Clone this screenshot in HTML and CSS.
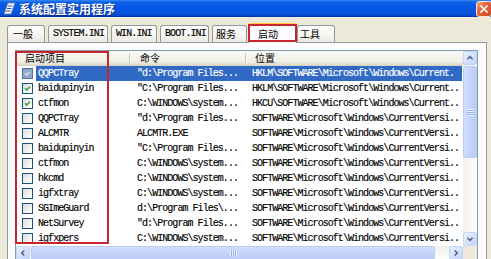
FILE: index.html
```html
<!DOCTYPE html>
<html lang="zh-CN">
<head>
<meta charset="utf-8">
<title>系统配置实用程序</title>
<link rel="stylesheet" href="styles.css">
</head>
<body>
<div class="window">
  <div class="titlebar">
    <svg class="app-icon" viewBox="0 0 13 13" width="13" height="13">
      <path d="M5 1 L12 1 L8 12 L1 12 Z" fill="#F4F6FA" stroke="#6A7FA8" stroke-width="0.8"/>
      <path d="M5 4 L9.5 4 M4 6.5 L8.5 6.5 M3 9 L7.5 9" stroke="#2D56B8" stroke-width="1"/>
    </svg>
    <span class="title">系统配置实用程序</span>
    <div class="close">
      <svg viewBox="0 0 16 16" width="16" height="16">
        <path d="M4.5 4.5 L11.5 11.5 M11.5 4.5 L4.5 11.5" stroke="#fff" stroke-width="1.8" stroke-linecap="square"/>
      </svg>
    </div>
  </div>

  <div class="tabs">
    <div class="tab w-general">一般</div>
    <div class="tab w-system mono">SYSTEM.INI</div>
    <div class="tab w-win mono">WIN.INI</div>
    <div class="tab w-boot mono">BOOT.INI</div>
    <div class="tab w-service">服务</div>
    <div class="tab tab-active w-startup">启动</div>
    <div class="tab w-tools">工具</div>
  </div>

  <div class="panel">
    <div class="listview">
      <div class="lv-main">
        <div class="lv-header">
          <div class="hcell h1">启动项目</div>
          <div class="hcell h2">命令</div>
          <div class="hcell h3">位置</div>
        </div>

        <div class="row selected">
          <div class="cb-cell"><span class="cb cb-sel"><svg viewBox="0 0 11 11"><path d="M2.5 5.3 L4.5 7.4 L8.5 3.2" class="chk-sel"/></svg></span></div>
          <div class="cell name">QQPCTray</div>
          <div class="cell cmd">"d:\Program Files...</div>
          <div class="cell loc">HKLM\SOFTWARE\Microsoft\Windows\Current.</div>
        </div>
        <div class="row">
          <div class="cb-cell"><span class="cb"><svg viewBox="0 0 11 11"><path d="M2.5 5.3 L4.5 7.4 L8.5 3.2" class="chk"/></svg></span></div>
          <div class="cell name">baidupinyin</div>
          <div class="cell cmd">"C:\Program Files...</div>
          <div class="cell loc">HKLM\SOFTWARE\Microsoft\Windows\Current..</div>
        </div>
        <div class="row">
          <div class="cb-cell"><span class="cb"><svg viewBox="0 0 11 11"><path d="M2.5 5.3 L4.5 7.4 L8.5 3.2" class="chk"/></svg></span></div>
          <div class="cell name">ctfmon</div>
          <div class="cell cmd">C:\WINDOWS\system...</div>
          <div class="cell loc">HKCU\SOFTWARE\Microsoft\Windows\Current..</div>
        </div>
        <div class="row">
          <div class="cb-cell"><span class="cb"></span></div>
          <div class="cell name">QQPCTray</div>
          <div class="cell cmd">"d:\Program Files...</div>
          <div class="cell loc">SOFTWARE\Microsoft\Windows\CurrentVersi..</div>
        </div>
        <div class="row">
          <div class="cb-cell"><span class="cb"></span></div>
          <div class="cell name">ALCMTR</div>
          <div class="cell cmd">ALCMTR.EXE</div>
          <div class="cell loc">SOFTWARE\Microsoft\Windows\CurrentVersi..</div>
        </div>
        <div class="row">
          <div class="cb-cell"><span class="cb"></span></div>
          <div class="cell name">baidupinyin</div>
          <div class="cell cmd">"C:\Program Files...</div>
          <div class="cell loc">SOFTWARE\Microsoft\Windows\CurrentVersi..</div>
        </div>
        <div class="row">
          <div class="cb-cell"><span class="cb"></span></div>
          <div class="cell name">ctfmon</div>
          <div class="cell cmd">C:\WINDOWS\system...</div>
          <div class="cell loc">SOFTWARE\Microsoft\Windows\CurrentVersi..</div>
        </div>
        <div class="row">
          <div class="cb-cell"><span class="cb"></span></div>
          <div class="cell name">hkcmd</div>
          <div class="cell cmd">C:\WINDOWS\system...</div>
          <div class="cell loc">SOFTWARE\Microsoft\Windows\CurrentVersi..</div>
        </div>
        <div class="row">
          <div class="cb-cell"><span class="cb"></span></div>
          <div class="cell name">igfxtray</div>
          <div class="cell cmd">C:\WINDOWS\system...</div>
          <div class="cell loc">SOFTWARE\Microsoft\Windows\CurrentVersi..</div>
        </div>
        <div class="row">
          <div class="cb-cell"><span class="cb"></span></div>
          <div class="cell name">SGImeGuard</div>
          <div class="cell cmd">d:\Program Files\...</div>
          <div class="cell loc">SOFTWARE\Microsoft\Windows\CurrentVersi..</div>
        </div>
        <div class="row">
          <div class="cb-cell"><span class="cb"></span></div>
          <div class="cell name">NetSurvey</div>
          <div class="cell cmd">"d:\Program Files...</div>
          <div class="cell loc">SOFTWARE\Microsoft\Windows\CurrentVersi..</div>
        </div>
        <div class="row">
          <div class="cb-cell"><span class="cb"></span></div>
          <div class="cell name">igfxpers</div>
          <div class="cell cmd">C:\WINDOWS\system...</div>
          <div class="cell loc">SOFTWARE\Microsoft\Windows\CurrentVersi..</div>
        </div>
      </div>

      <div class="vscroll">
        <div class="sbtn"><svg viewBox="0 0 14 14"><path d="M4 8.5 L7 5.5 L10 8.5" class="arrow"/></svg></div>
        <div class="vthumb"><span class="grip-v"></span></div>
        <div class="vtrack"></div>
        <div class="sbtn"><svg viewBox="0 0 14 14"><path d="M4 5.5 L7 8.5 L10 5.5" class="arrow"/></svg></div>
      </div>

      <div class="hscroll">
        <div class="sbtn"><svg viewBox="0 0 14 14"><path d="M8.5 4 L5.5 7 L8.5 10" class="arrow"/></svg></div>
        <div class="hthumb"><span class="grip-h"></span></div>
        <div class="htrack"></div>
        <div class="sbtn"><svg viewBox="0 0 14 14"><path d="M5.5 4 L8.5 7 L5.5 10" class="arrow"/></svg></div>
      </div>
      <div class="corner"></div>
    </div>
  </div>

  <div class="mark mark-tab"></div>
  <div class="mark mark-col"></div>
</div>
</body>
</html>
```

FILE: styles.css
```css
* { box-sizing: border-box; margin: 0; padding: 0; }

html, body {
  width: 491px;
  height: 259px;
  overflow: hidden;
}

body {
  background: #ECE9D8;
  font-family: "Noto Sans CJK SC", "Noto Sans", sans-serif;
  font-size: 10px;
  color: #000;
}

.window {
  position: relative;
  width: 491px;
  height: 259px;
  overflow: hidden;
}

/* ---------- title bar ---------- */
.titlebar {
  height: 17px;
  display: flex;
  align-items: center;
  padding-left: 3px;
  background: linear-gradient(#3A8CF6 0, #0D62E6 2px, #0558E4 40%, #0753DB 80%, #0645C4 94%, #00339E 100%);
}

.app-icon { flex: none; width: 13px; height: 13px; }

.title {
  margin-left: 3px;
  color: #fff;
  font-size: 12px;
  font-weight: bold;
  line-height: 17px;
  text-shadow: 1px 1px 0 #0B2A8E;
}

.close {
  margin-left: auto;
  margin-right: -1px;
  width: 16px;
  height: 16px;
  border: 1px solid #F6E0D8;
  border-radius: 3px;
  background: linear-gradient(135deg, #F3A68A 0, #E2643D 40%, #D2451F 100%);
  display: flex;
  align-items: center;
  justify-content: center;
}
.close svg { width: 14px; height: 14px; }

/* ---------- tabs ---------- */
.mono {
  font-family: "Liberation Mono", monospace;
  font-size: 10px;
  letter-spacing: -0.9px;
  -webkit-text-stroke: 0.15px #000;
}

.tabs {
  position: relative;
  z-index: 2;
  display: flex;
  align-items: flex-end;
  gap: 3px;
  height: 19px;
  margin-top: 6px;
  padding-left: 7px;
}

.tab {
  height: 17px;
  padding-left: 5px;
  border: 1px solid #919B9C;
  border-bottom: none;
  border-radius: 3px 3px 0 0;
  background: linear-gradient(#FEFEFE, #F4F3EE 60%, #E9E8E1);
  line-height: 16px;
  white-space: nowrap;
}
.tab.mono { padding-left: 4px; }

.w-general { width: 38px; }
.w-system  { width: 60px; }
.w-win     { width: 46px; }
.w-boot    { width: 49px; }
.w-service { width: 35px; padding-left: 3px; }
.w-startup { width: 49px; }
.w-tools   { width: 38px; padding-left: 2px; }

.tab-active {
  height: 20px;
  margin: 0 -3px -1px -2px;
  padding-left: 9px;
  background: #FCFCFE;
  border-top: 2px solid #FFC83C;
  line-height: 18px;
}

/* ---------- panel ---------- */
.panel {
  position: relative;
  z-index: 1;
  height: 260px;
  margin: 0 4px 0 7px;
  padding: 7px 0 0 7px;
  border: 1px solid #919B9C;
  background: #FCFCFE;
}

.listview {
  width: 463px;
  border: 1px solid #7F9DB9;
  background: #fff;
  display: grid;
  grid-template-columns: 447px 14px;
  grid-template-rows: 195px 14px;
}

.lv-main { overflow: hidden; }

.lv-header {
  height: 15px;
  display: grid;
  grid-template-columns: 114px 116px 1fr;
  background: linear-gradient(#FAFAF6, #F0EFE6 70%, #E3E0D0 88%, #D5D1C0 100%);
  line-height: 14px;
}

.hcell {
  white-space: nowrap;
  position: relative;
}
.h1 { padding-left: 9px; }
.h2 { padding-left: 10px; }
.h3 { padding-left: 9px; }
.h1::after, .h2::after {
  content: "";
  position: absolute;
  right: 0;
  top: 2px;
  bottom: 3px;
  width: 1px;
  background: #C7C5B2;
  box-shadow: 1px 0 0 #fff;
}

.row {
  height: 15px;
  display: grid;
  grid-template-columns: 20px 94px 116px 1fr;
  align-items: center;
  font-family: "Liberation Mono", monospace;
  font-size: 10px;
  letter-spacing: -0.95px;
  line-height: 15px;
  -webkit-text-stroke: 0.15px currentColor;
}

.cell {
  height: 15px;
  white-space: nowrap;
  overflow: hidden;
}
.name { padding-left: 2px; }
.cmd  { padding-left: 7px; }
.loc  { padding-left: 6px; margin-right: 1px; }

.selected .cell {
  background: #316AC5;
  color: #fff;
}

.cb-cell {
  height: 15px;
  display: flex;
  align-items: center;
  padding-left: 6px;
}

.cb {
  display: block;
  width: 11px;
  height: 11px;
  border: 1px solid #1C5180;
  background: linear-gradient(135deg, #DCDCD7, #FFFFFF);
}
.cb svg { display: block; width: 9px; height: 9px; margin: 0; overflow: visible; }
.chk { fill: none; stroke: #21A121; stroke-width: 1.7; }

.cb-sel {
  border-color: #4F6F9E;
  background: #8FA7CB;
}
.chk-sel { fill: none; stroke: #DCE6F6; stroke-width: 1.7; }

/* ---------- scrollbars ---------- */
.vscroll {
  display: flex;
  flex-direction: column;
  background: linear-gradient(90deg, #F3F1EC, #FEFEFB);
}

.hscroll {
  display: flex;
  background: linear-gradient(#F3F1EC, #FEFEFB);
}

.sbtn {
  flex: none;
  width: 14px;
  height: 14px;
  border: 1px solid #C5D5F6;
  border-radius: 2px;
  background: linear-gradient(135deg, #E8F0FE, #C3D4FC);
}
.sbtn svg { display: block; width: 12px; height: 12px; }
.arrow { fill: none; stroke: #4D6185; stroke-width: 1.8; }

.vthumb {
  flex: none;
  height: 92px;
  margin-top: 1px;
  border: 1px solid #B8CCF4;
  border-radius: 2px;
  background: linear-gradient(90deg, #D2DEFB, #C6D4F8 50%, #BBCCF5);
  display: flex;
  align-items: center;
  justify-content: center;
}
.vtrack { flex: 1; }

.hthumb {
  flex: none;
  width: 404px;
  margin-left: 1px;
  border: 1px solid #B8CCF4;
  border-radius: 2px;
  background: linear-gradient(#D2DEFB, #C6D4F8 50%, #BBCCF5);
  display: flex;
  align-items: center;
  justify-content: center;
}
.htrack { flex: 1; }

.grip-v {
  display: block;
  width: 7px;
  height: 7px;
  background: repeating-linear-gradient(#EEF4FE 0 1px, #8CB0F8 1px 2px);
}
.grip-h {
  display: block;
  width: 7px;
  height: 7px;
  background: repeating-linear-gradient(90deg, #EEF4FE 0 1px, #8CB0F8 1px 2px);
}

.corner { background: #ECE9D8; }

/* ---------- annotation boxes ---------- */
.mark {
  position: absolute;
  z-index: 5;
  border: 2px solid #C6262E;
  pointer-events: none;
}
.mark-tab { left: 248px; top: 24px; width: 49px; height: 18px; }
.mark-col { left: 15px; top: 51px; width: 94px; height: 193px; }
```
